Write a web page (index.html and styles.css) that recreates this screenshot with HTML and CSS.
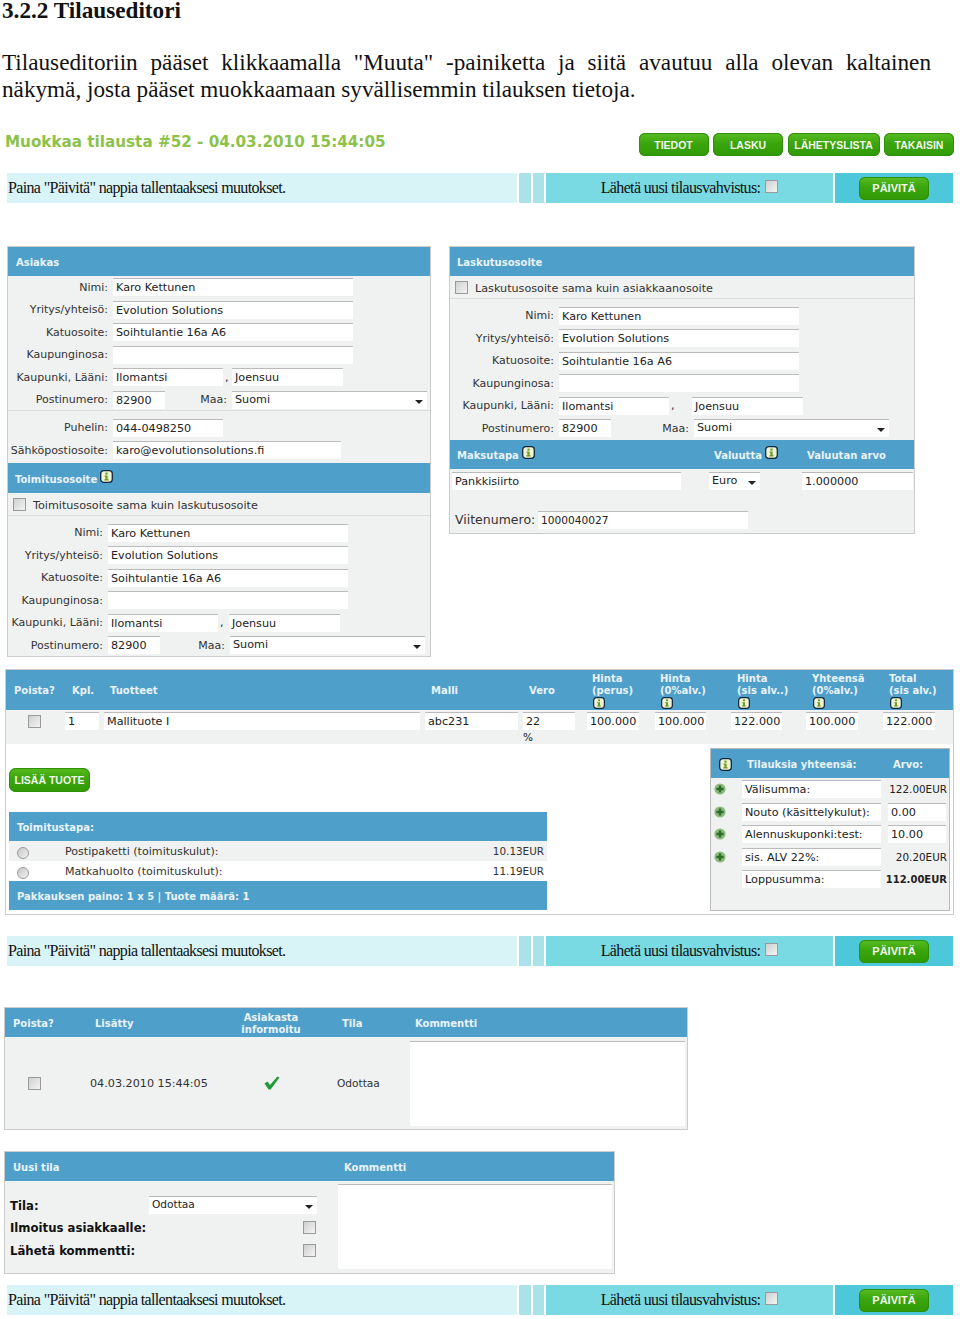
FILE: index.html

```html
<!DOCTYPE html>
<html lang="fi">
<head>
    <meta charset="UTF-8">
    <title>3.2.2 Tilauseditori</title>
    <link rel="stylesheet" href="styles.css">
</head>
<body>
    <svg class="defs" width="0" height="0">
        <symbol id="info" viewBox="0 0 13 13">
            <rect x="0.7" y="0.7" width="11.6" height="11.6" rx="3" fill="#eef2d6" stroke="#10283c" stroke-width="1.3"/>
            <rect x="5.4" y="2.6" width="2.2" height="2" fill="#6f9a1e"/>
            <path d="M4.6 5.6h3v3.6h1v1.2h-4.2v-1.2h1v-2.4h-.8z" fill="#6f9a1e"/>
        </symbol>
        <symbol id="plus" viewBox="0 0 12 12">
            <circle cx="6" cy="6" r="5.6" fill="#8dbb7c"/>
            <path d="M4.8 2.4h2.4v2.4h2.4v2.4h-2.4v2.4h-2.4v-2.4h-2.4v-2.4h2.4z" fill="#2f6b2c"/>
        </symbol>
    </svg>

    <div class="doc">
        <h1>3.2.2 Tilauseditori</h1>
        <p>Tilauseditoriin pääset klikkaamalla "Muuta" -painiketta ja siitä avautuu alla olevan kaltainen näkymä, josta pääset muokkaamaan syvällisemmin tilauksen tietoja.</p>
    </div>

    <div class="toolbar">
        <div class="page-title">Muokkaa tilausta #52 - 04.03.2010 15:44:05</div>
        <div class="nav">
            <a class="btn">TIEDOT</a>
            <a class="btn">LASKU</a>
            <a class="btn btn-wide">LÄHETYSLISTA</a>
            <a class="btn">TAKAISIN</a>
        </div>
    </div>

    <div class="save-bar bar-1">
        <div class="save-msg">Paina "Päivitä" nappia tallentaaksesi muutokset.</div>
        <div class="save-gap"></div>
        <div class="save-gap"></div>
        <div class="save-confirm">Lähetä uusi tilausvahvistus: <input type="checkbox" class="check"></div>
        <div class="save-action"><a class="btn">PÄIVITÄ</a></div>
    </div>

    <div class="addresses">
        <div class="panel panel-left">
            <div class="head">Asiakas</div>
            <div class="form form-a sep">
                <div class="row"><span class="lbl">Nimi:</span><span class="field w-full">Karo Kettunen</span></div>
                <div class="row"><span class="lbl">Yritys/yhteisö:</span><span class="field w-full">Evolution Solutions</span></div>
                <div class="row"><span class="lbl">Katuosoite:</span><span class="field w-full">Soihtulantie 16a A6</span></div>
                <div class="row"><span class="lbl">Kaupunginosa:</span><span class="field w-full"></span></div>
                <div class="row"><span class="lbl">Kaupunki, Lääni:</span><span class="field w-half">Ilomantsi</span><span class="comma">,</span><span class="field w-half2">Joensuu</span></div>
                <div class="row"><span class="lbl">Postinumero:</span><span class="field w-zip">82900</span><span class="maa">Maa:</span><span class="field select w-select">Suomi</span></div>
            </div>
            <div class="form form-a form-contact">
                <div class="row"><span class="lbl">Puhelin:</span><span class="field w-half">044-0498250</span></div>
                <div class="row"><span class="lbl">Sähköpostiosoite:</span><span class="field w-mail">karo@evolutionsolutions.fi</span></div>
            </div>
            <div class="head head-tall">Toimitusosoite <svg class="info"><use href="#info"/></svg></div>
            <div class="same"><input type="checkbox" class="check"><span>Toimitusosoite sama kuin laskutusosoite</span></div>
            <div class="form form-b">
                <div class="row"><span class="lbl">Nimi:</span><span class="field w-full">Karo Kettunen</span></div>
                <div class="row"><span class="lbl">Yritys/yhteisö:</span><span class="field w-full">Evolution Solutions</span></div>
                <div class="row"><span class="lbl">Katuosoite:</span><span class="field w-full">Soihtulantie 16a A6</span></div>
                <div class="row"><span class="lbl">Kaupunginosa:</span><span class="field w-full"></span></div>
                <div class="row"><span class="lbl">Kaupunki, Lääni:</span><span class="field w-half">Ilomantsi</span><span class="comma">,</span><span class="field w-half2">Joensuu</span></div>
                <div class="row"><span class="lbl">Postinumero:</span><span class="field w-zip">82900</span><span class="maa">Maa:</span><span class="field select w-select">Suomi</span></div>
            </div>
        </div>

        <div class="panel panel-right">
            <div class="head head-bill">Laskutusosoite</div>
            <div class="same"><input type="checkbox" class="check"><span>Laskutusosoite sama kuin asiakkaanosoite</span></div>
            <div class="form form-c">
                <div class="row"><span class="lbl">Nimi:</span><span class="field w-full">Karo Kettunen</span></div>
                <div class="row"><span class="lbl">Yritys/yhteisö:</span><span class="field w-full">Evolution Solutions</span></div>
                <div class="row"><span class="lbl">Katuosoite:</span><span class="field w-full">Soihtulantie 16a A6</span></div>
                <div class="row"><span class="lbl">Kaupunginosa:</span><span class="field w-full"></span></div>
                <div class="row"><span class="lbl">Kaupunki, Lääni:</span><span class="field w-half">Ilomantsi</span><span class="comma">,</span><span class="field w-half2">Joensuu</span></div>
                <div class="row"><span class="lbl">Postinumero:</span><span class="field w-zip">82900</span><span class="maa">Maa:</span><span class="field select w-select">Suomi</span></div>
            </div>
            <div class="head pay-grid">
                <span>Maksutapa <svg class="info"><use href="#info"/></svg></span>
                <span>Valuutta <svg class="info"><use href="#info"/></svg></span>
                <span>Valuutan arvo</span>
            </div>
            <div class="pay-row">
                <span class="field w-pay">Pankkisiirto</span>
                <span class="field select w-euro">Euro</span>
                <span class="field w-rate">1.000000</span>
            </div>
            <div class="ref-row"><span class="ref-lbl">Viitenumero:</span><span class="field w-ref">1000040027</span></div>
        </div>
    </div>

    <div class="panel order">
        <div class="head order-grid order-head">
            <span>Poista?</span>
            <span>Kpl.</span>
            <span>Tuotteet</span>
            <span>Malli</span>
            <span>Vero</span>
            <span class="stack">Hinta<br>(perus)<svg class="info"><use href="#info"/></svg></span>
            <span class="stack">Hinta<br>(0%alv.)<svg class="info"><use href="#info"/></svg></span>
            <span class="stack">Hinta<br>(sis alv..)<svg class="info"><use href="#info"/></svg></span>
            <span class="stack">Yhteensä<br>(0%alv.)<svg class="info"><use href="#info"/></svg></span>
            <span class="stack">Total<br>(sis alv.)<svg class="info"><use href="#info"/></svg></span>
        </div>
        <div class="item-row">
            <span class="item-check"><input type="checkbox" class="check"></span>
            <span class="field w-kpl">1</span>
            <span class="field w-name">Mallituote I</span>
            <span class="field w-code">abc231</span>
            <span class="vat"><span class="field w-vat">22</span><span class="pct">%</span></span>
            <span class="field w-p1">100.000</span>
            <span class="field w-p2">100.000</span>
            <span class="field w-p2">122.000</span>
            <span class="field w-p1">100.000</span>
            <span class="field w-p1">122.000</span>
        </div>
        <div class="order-bottom">
            <div class="order-left">
                <a class="btn btn-add">LISÄÄ TUOTE</a>
                <div class="ship">
                    <div class="head">Toimitustapa:</div>
                    <div class="ship-row"><input type="radio" class="radio"><span class="ship-name">Postipaketti (toimituskulut):</span><span class="ship-price">10.13EUR</span></div>
                    <div class="ship-row ship-white"><input type="radio" class="radio"><span class="ship-name">Matkahuolto (toimituskulut):</span><span class="ship-price">11.19EUR</span></div>
                    <div class="head">Pakkauksen paino: 1 x 5 | Tuote määrä: 1</div>
                </div>
            </div>
            <div class="panel totals">
                <div class="head totals-head">
                    <svg class="info"><use href="#info"/></svg>
                    <span class="totals-title">Tilauksia yhteensä:</span>
                    <span>Arvo:</span>
                </div>
                <div class="total-row"><svg class="plus"><use href="#plus"/></svg><span class="field w-total">Välisumma:</span><span class="total-val">122.00EUR</span></div>
                <div class="total-row"><svg class="plus"><use href="#plus"/></svg><span class="field w-total">Nouto (käsittelykulut):</span><span class="field w-sum">0.00</span></div>
                <div class="total-row"><svg class="plus"><use href="#plus"/></svg><span class="field w-total">Alennuskuponki:test:</span><span class="field w-sum">10.00</span></div>
                <div class="total-row"><svg class="plus"><use href="#plus"/></svg><span class="field w-total">sis. ALV 22%:</span><span class="total-val">20.20EUR</span></div>
                <div class="total-row total-end"><span class="field w-total">Loppusumma:</span><span class="total-val total-bold">112.00EUR</span></div>
            </div>
        </div>
    </div>

    <div class="save-bar bar-2">
        <div class="save-msg">Paina "Päivitä" nappia tallentaaksesi muutokset.</div>
        <div class="save-gap"></div>
        <div class="save-gap"></div>
        <div class="save-confirm">Lähetä uusi tilausvahvistus: <input type="checkbox" class="check"></div>
        <div class="save-action"><a class="btn">PÄIVITÄ</a></div>
    </div>

    <div class="panel history">
        <div class="head history-grid">
            <span>Poista?</span>
            <span>Lisätty</span>
            <span class="informed">Asiakasta<br>informoitu</span>
            <span>Tila</span>
            <span>Kommentti</span>
        </div>
        <div class="history-row">
            <span class="history-check"><input type="checkbox" class="check"></span>
            <span class="history-date">04.03.2010 15:44:05</span>
            <svg class="tick" viewBox="0 0 16 14"><path d="M0.5 7.5 L3.4 5.6 L6 9 L13.4 0.6 L15.5 1.6 L6.6 13.6 L4.6 13.6 Z" fill="#1f9c3a"/></svg>
            <span class="history-state">Odottaa</span>
            <span class="area area-history"></span>
        </div>
    </div>

    <div class="panel new-state">
        <div class="head new-head">
            <span>Uusi tila</span>
            <span>Kommentti</span>
        </div>
        <div class="new-body">
            <div class="new-form">
                <div class="new-row"><span class="new-lbl">Tila:</span><span class="field select w-state">Odottaa</span></div>
                <div class="new-row"><span class="new-lbl">Ilmoitus asiakkaalle:</span><input type="checkbox" class="check"></div>
                <div class="new-row"><span class="new-lbl">Lähetä kommentti:</span><input type="checkbox" class="check"></div>
            </div>
            <span class="area area-new"></span>
        </div>
    </div>

    <div class="save-bar bar-3">
        <div class="save-msg">Paina "Päivitä" nappia tallentaaksesi muutokset.</div>
        <div class="save-gap"></div>
        <div class="save-gap"></div>
        <div class="save-confirm">Lähetä uusi tilausvahvistus: <input type="checkbox" class="check"></div>
        <div class="save-action"><a class="btn">PÄIVITÄ</a></div>
    </div>
</body>
</html>
```

FILE: styles.css

```css
* {
    box-sizing: border-box;
}
body {
    margin: 0;
    background: #fff;
    color: #222;
    font-family: "DejaVu Sans", sans-serif;
    font-size: 11px;
}
.defs {
    position: absolute;
}

/* document text */
.doc {
    padding: 0 29px 0 2px;
    font-family: "Liberation Serif", serif;
    color: #111;
}
.doc h1 {
    margin: 0;
    font-size: 23.2px;
    line-height: 20px;
}
.doc p {
    margin: 29px 0 0;
    font-size: 23.2px;
    line-height: 26.5px;
    text-align: justify;
}

/* top of the editor */
.toolbar {
    display: flex;
    justify-content: space-between;
    align-items: flex-start;
    height: 25px;
    margin-top: 30px;
    padding: 0 6px 0 5px;
}
.page-title {
    padding-top: 1px;
    color: #8cc24a;
    font-size: 15.2px;
    font-weight: bold;
    line-height: 18px;
}
.nav {
    display: flex;
    gap: 4.5px;
    padding-top: 1px;
}
.btn {
    display: flex;
    justify-content: center;
    align-items: center;
    width: 70px;
    height: 23px;
    border-radius: 6px;
    background: linear-gradient(#58bd22, #3aa50c 45%, #2f9a05);
    box-shadow: inset 0 0 0 1px #2e8f0a;
    color: #f2f8ec;
    font-family: "Liberation Sans", sans-serif;
    font-size: 10.5px;
    font-weight: bold;
}
.btn-wide {
    width: 92px;
}

/* save bar */
.save-bar {
    display: flex;
    gap: 2px;
    width: 946px;
    height: 30px;
    margin-left: 7px;
    font-family: "Liberation Serif", serif;
    font-size: 16px;
    letter-spacing: -0.65px;
    color: #111;
}
.bar-1 {
    margin-top: 16px;
}
.bar-2 {
    margin-top: 21px;
}
.bar-3 {
    margin-top: 11px;
}
.save-msg {
    display: flex;
    align-items: center;
    width: 510px;
    padding-left: 1px;
    background: #d9f4f7;
}
.save-gap {
    width: 11.5px;
    background: #a9e3e9;
}
.save-confirm {
    display: flex;
    align-items: center;
    justify-content: center;
    gap: 5px;
    width: 287px;
    background: #7adae3;
}
.save-confirm .check {
    margin-top: -4px;
}
.save-action {
    display: flex;
    align-items: center;
    justify-content: center;
    flex: 1;
    background: #4cc8da;
    letter-spacing: 0;
}
.save-action .btn {
    font-size: 11px;
}

/* panels */
.panel {
    border: 1px solid #ccc;
    background: #f0f1f1;
}
.head {
    display: flex;
    align-items: center;
    height: 29px;
    padding: 2px 0 0 8px;
    background: #4f9fcb;
    color: #e9f3f8;
    font-size: 10px;
    font-weight: bold;
}
.head-tall {
    height: 30px;
    padding-left: 7px;
}
.head-bill {
    padding-left: 7px;
}
.info {
    flex: none;
    width: 13px;
    height: 13px;
    margin: -5px 0 0 3px;
}
.addresses {
    display: flex;
    align-items: flex-start;
    gap: 18px;
    margin: 43px 0 0 7px;
}
.panel-left {
    width: 424px;
    height: 411px;
}
.panel-right {
    width: 466px;
    height: 288px;
}
.same {
    display: flex;
    align-items: center;
    height: 23px;
    padding-left: 5px;
    border-bottom: 1px solid #ddd;
    font-size: 11.2px;
    color: #333;
}
.same span {
    margin: 3px 0 0 7px;
}
.check {
    appearance: none;
    flex: none;
    width: 13px;
    height: 13px;
    margin: 0;
    border: 1px solid #9a9a9a;
    background: linear-gradient(135deg, #cfcfcf, #f4f4f4);
}
.radio {
    appearance: none;
    flex: none;
    width: 12px;
    height: 12px;
    margin: 3px 0 0 8px;
    border: 1px solid #9a9a9a;
    border-radius: 50%;
    background: linear-gradient(135deg, #c6c6c6, #f2f2f2);
}

/* address forms */
.form {
    --label: 100px;
    --comma: 9px;
    --half2: 111px;
    --maa: 62px;
    --select: 195px;
}
.form-a.sep {
    height: 135px;
    border-bottom: 1px solid #ddd;
}
.form-contact {
    padding-top: 5.5px;
    height: 52px;
}
.form-b {
    --label: 95px;
    --comma: 11px;
    --maa: 65px;
    padding-top: 5.5px;
}
.form-c {
    --label: 104px;
    --comma: 23px;
    --maa: 78px;
    padding-top: 5.5px;
    height: 140.5px;
}
.row {
    display: flex;
    align-items: center;
    height: 22.5px;
}
.lbl {
    flex: none;
    width: var(--label);
    margin-right: 5px;
    text-align: right;
    color: #333;
    white-space: nowrap;
}
.field {
    display: block;
    flex: none;
    height: 18px;
    padding: 0 3px;
    border-top: 1px solid #bbb;
    background: #fff;
    color: #222;
    font-size: 11.2px;
    line-height: 17px;
    white-space: nowrap;
    overflow: hidden;
}
.select {
    position: relative;
    line-height: 15px;
}
.select::after {
    content: "";
    position: absolute;
    right: 4px;
    top: 8px;
    border: 4px solid transparent;
    border-top-color: #222;
    border-bottom: 0;
}
.comma {
    flex: none;
    width: var(--comma);
    padding-left: 2px;
}
.maa {
    flex: none;
    width: var(--maa);
    margin-right: 5px;
    text-align: right;
    color: #333;
}
.w-full {
    width: 240px;
}
.w-half {
    width: 110px;
}
.w-half2 {
    width: var(--half2);
}
.w-zip {
    width: 52px;
}
.w-select {
    width: var(--select);
}
.w-mail {
    width: 228px;
}

/* payment */
.pay-grid {
    display: grid;
    grid-template-columns: 257px 93px 1fr;
    padding-left: 7px;
}
.pay-grid span {
    display: flex;
    align-items: center;
}
.pay-row {
    display: flex;
    padding: 3px 0 0 2px;
}
.w-pay {
    width: 229px;
}
.w-euro {
    width: 51px;
    margin-left: 28px;
}
.w-rate {
    width: 111px;
    margin-left: 42px;
}
.ref-row {
    display: flex;
    align-items: center;
    margin-top: 21px;
    padding-left: 5px;
}
.ref-lbl {
    width: 83px;
    font-size: 12.5px;
    color: #333;
}
.w-ref {
    width: 210px;
    font-size: 10.6px;
}

/* order */
.order {
    width: 949px;
    height: 246px;
    margin: 12px 0 0 5px;
    background: #fff;
}
.order-grid {
    display: grid;
    grid-template-columns: 58px 38px 321px 98px 63px 68px 77px 75px 77px 1fr;
}
.order-head {
    height: 40px;
    align-items: center;
    line-height: 12px;
}
.stack {
    display: block;
}
.stack .info {
    display: block;
    width: 12px;
    height: 12px;
    margin: 0 0 0 1px;
}
.item-row {
    display: grid;
    grid-template-columns: 59px 39px 321px 98px 64px 68px 76px 75px 77px 1fr;
    height: 34px;
    padding-top: 2px;
    background: #f0f1f1;
}
.item-row > * {
    justify-self: start;
}
.item-check {
    padding: 3px 0 0 22px;
}
.vat {
    display: block;
}
.pct {
    display: block;
    font-size: 10.5px;
    margin-top: 1px;
}
.w-kpl {
    width: 34px;
}
.w-name {
    width: 316px;
}
.w-code {
    width: 93px;
}
.w-vat {
    width: 52px;
}
.w-p1 {
    width: 52px;
}
.w-p2 {
    width: 51px;
}
.order-bottom {
    display: flex;
    justify-content: space-between;
    padding: 4px 3px 0;
}
.btn-add {
    width: 81px;
    height: 24px;
    margin-top: 20px;
    font-size: 10.5px;
    border-radius: 7px;
}
.ship {
    width: 538px;
    margin-top: 20px;
    background: #f0f1f1;
}
.ship-row {
    display: flex;
    align-items: center;
    height: 20px;
    padding-right: 3px;
    font-size: 10.4px;
    color: #333;
}
.ship-white {
    background: #fff;
}
.ship-name {
    margin-left: 36px;
    flex: 1;
    font-size: 11.1px;
}
.totals {
    width: 240px;
    height: 163px;
    border-color: #bbb;
}
.totals-head {
    padding-left: 8px;
}
.totals-head .info {
    margin: 0;
}
.totals-title {
    width: 146px;
    margin-left: 15px;
}
.total-row {
    display: flex;
    align-items: center;
    height: 22.5px;
}
.plus {
    flex: none;
    width: 12px;
    height: 12px;
    margin: 0 16px 0 3px;
}
.total-row.total-end {
    padding-left: 31px;
}
.w-total {
    width: 139px;
}
.w-sum {
    width: 58px;
    margin-left: 7px;
}
.total-val {
    flex: 1;
    padding-right: 2px;
    text-align: right;
    font-size: 10.4px;
}
.total-val.total-bold {
    font-size: 10px;
    font-weight: bold;
}

/* history */
.history {
    width: 684px;
    height: 123px;
    margin: 41px 0 0 4px;
}
.history-grid {
    display: grid;
    grid-template-columns: 82px 118px 129px 73px 1fr;
    line-height: 12px;
}
.informed {
    text-align: center;
    padding-right: 13px;
}
.history-row {
    display: flex;
    height: 92px;
    align-items: center;
}
.history-check {
    display: flex;
    padding-left: 23px;
    width: 85px;
}
.history-date {
    width: 174px;
    font-size: 11.2px;
    color: #333;
}
.tick {
    flex: none;
    width: 16px;
    height: 14px;
    margin-right: 57px;
}
.history-state {
    width: 73px;
    font-size: 10.6px;
    color: #333;
}
.area {
    display: block;
    flex: none;
    border-top: 1px solid #bbb;
    background: #fff;
}
.area-history {
    width: 275px;
    height: 85px;
}

/* new state */
.new-state {
    width: 611px;
    height: 123px;
    margin: 21px 0 0 4px;
}
.new-head {
    display: grid;
    grid-template-columns: 331px 1fr;
}
.new-body {
    display: flex;
    padding-top: 3px;
}
.new-form {
    width: 333px;
    padding: 10px 20px 0 5px;
}
.new-row {
    display: flex;
    justify-content: space-between;
    align-items: center;
    height: 22.5px;
}
.new-lbl {
    font-size: 13px;
    font-stretch: condensed;
    font-weight: bold;
    color: #111;
}
.new-row .check {
    margin-right: 2.5px;
}
.w-state {
    width: 168px;
    margin-right: 1px;
    font-size: 10.6px;
}
.area-new {
    width: 274px;
    height: 85px;
}
```
